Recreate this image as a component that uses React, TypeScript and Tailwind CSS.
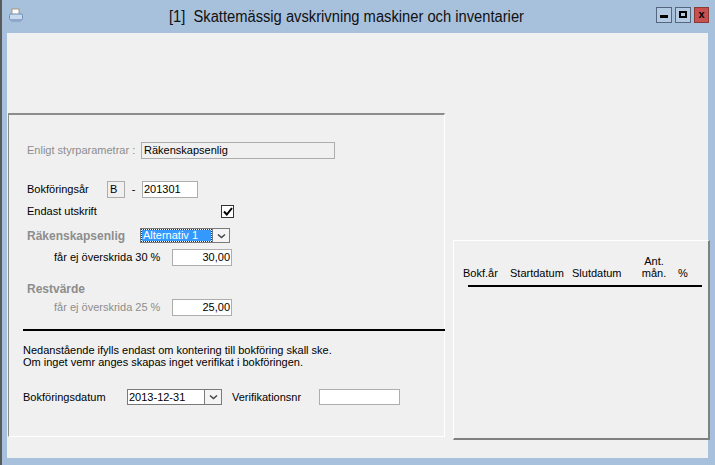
import React from "react";

const Arrow = () => (
  <div className="w-[17px] shrink-0 h-full border-l border-[#7a7a7a] bg-[#f4f4f4] flex items-center justify-center">
    <svg width="9" height="6" viewBox="0 0 9 6"><path d="M1 1.5 L4.5 4.5 L8 1.5" stroke="#444" strokeWidth="1.5" fill="none" /></svg>
  </div>
);

export default function App() {
  return (
    <div className="w-[715px] h-[465px] bg-[#a7c0dc] relative overflow-hidden text-[11px] text-black whitespace-nowrap" style={{ fontFamily: "'Liberation Sans', Arial, sans-serif" }}>
      <div className="absolute left-0 top-0 w-[2px] h-full bg-[#5a5a5a]" />
      <div className="h-[33px] flex items-center pl-[8px] pr-[6px] relative">
        <svg width="16" height="16" viewBox="0 0 16 16" className="mt-[-2px]">
          <rect x="4" y="1" width="7" height="6" fill="#fff" stroke="#9a8a6a" strokeWidth="0.8" />
          <rect x="1.5" y="6" width="13" height="6" rx="1.5" fill="#c9d9ee" stroke="#6f8db5" />
          <rect x="3" y="11" width="10" height="3" fill="#8fa9cc" />
        </svg>
        <div className="flex-1 text-center text-[16px] text-[#111] pl-[14px]" style={{ transform: "scaleX(0.92)" }}>[1]&nbsp; Skattemässig avskrivning maskiner och inventarier</div>
        <div className="flex gap-[3px] mt-[-4px]">
          <div className="w-[16px] h-[16px] border border-[#55677f] bg-[#b4c9e2] flex items-center justify-center"><div className="w-[8px] h-[3px] bg-black mt-[4px]" /></div>
          <div className="w-[16px] h-[16px] border border-[#55677f] bg-[#b4c9e2] flex items-center justify-center"><div className="w-[8px] h-[7px] border-2 border-black" /></div>
          <div className="w-[15px] h-[16px] border border-[#8a3a32] bg-[#c75050] flex items-center justify-center text-[11px] font-bold leading-none">x</div>
        </div>
      </div>
      <div className="absolute left-[7px] top-[33px] w-[701px] h-[425px] bg-[#f0f0f0] flex">
        <div className="w-[438px] shrink-0 pt-[80px] flex flex-col">
          <div className="ml-[1px] h-[324px] border-t-2 border-l border-[#8c8c8c] border-r border-b border-r-white border-b-white flex flex-col pl-[18px]">
            <div className="mt-[27px] h-[17px] flex items-center">
              <span className="w-[114px] shrink-0 text-[#8d8d8d]">Enligt styrparametrar :</span>
              <div className="w-[194px] h-[17px] border border-[#adadad] bg-[#f0f0f0] pl-[2px] leading-[15px]">Räkenskapsenlig</div>
            </div>
            <div className="mt-[22px] h-[17px] flex items-center">
              <span className="w-[80px] shrink-0">Bokföringsår</span>
              <div className="w-[18px] h-[17px] border border-[#adadad] pl-[2px] leading-[15px]">B</div>
              <span className="w-[17px] text-center">-</span>
              <div className="w-[56px] h-[17px] border border-[#adadad] bg-white pl-[1px] leading-[15px]">201301</div>
            </div>
            <div className="mt-[7px] h-[13px] flex items-center">
              <span className="w-[194px] shrink-0">Endast utskrift</span>
              <div className="w-[13px] h-[13px] border border-[#333] bg-white flex items-center justify-center">
                <svg width="10" height="9" viewBox="0 0 10 9"><path d="M1 4.5 L3.8 7.5 L9 1" stroke="#000" strokeWidth="2" fill="none" /></svg>
              </div>
            </div>
            <div className="mt-[10px] h-[15px] flex items-center">
              <span className="w-[113px] shrink-0 font-bold text-[#8d8d8d] text-[12px]">Räkenskapsenlig</span>
              <div className="w-[90px] h-[15px] border border-[#7a7a7a] bg-white flex">
                <div className="flex-1 m-[1px] bg-[#3399ff] text-white leading-[11px] pl-[1px] outline-1 outline-dotted outline-[#333]">Alternativ 1</div>
                <Arrow />
              </div>
            </div>
            <div className="mt-[6px] h-[17px] flex items-center">
              <span className="w-[145px] shrink-0 pl-[27px]">får ej överskrida 30 %</span>
              <div className="w-[60px] h-[17px] border border-[#adadad] bg-white text-right pr-[1px] leading-[15px]">30,00</div>
            </div>
            <div className="mt-[16px] h-[14px] flex items-center font-bold text-[#8d8d8d] text-[12px]">Restvärde</div>
            <div className="mt-[3px] h-[17px] flex items-center">
              <span className="w-[145px] shrink-0 pl-[27px] text-[#8d8d8d]">får ej överskrida 25 %</span>
              <div className="w-[60px] h-[17px] border border-[#adadad] bg-white text-right pr-[1px] leading-[15px]">25,00</div>
            </div>
            <div className="mt-[13px] ml-[-4px] mr-[-1px] h-[2px] bg-black" />
            <div className="mt-[13px] ml-[-4px] leading-[12px]">
              <div>Nedanstående ifylls endast om kontering till bokföring skall ske.</div>
              <div>Om inget vemr anges skapas inget verifikat i bokföringen.</div>
            </div>
            <div className="mt-[21px] ml-[-4px] h-[16px] flex items-center">
              <span className="w-[104px] shrink-0">Bokföringsdatum</span>
              <div className="w-[95px] h-[16px] border border-[#7a7a7a] bg-white flex">
                <div className="flex-1 pl-[1px] leading-[14px]">2013-12-31</div>
                <Arrow />
              </div>
              <span className="w-[97px] shrink-0 pl-[10px]">Verifikationsnr</span>
              <div className="w-[81px] h-[16px] border border-[#adadad] bg-white" />
            </div>
          </div>
        </div>
        <div className="ml-[8px] pt-[207px]">
          <div className="w-[257px] h-[200px] border border-t-white border-l-white border-r-2 border-b-2 border-[#808080] pl-[9px] pr-[6px]">
            <div className="mt-[14px] flex items-end text-[11px] leading-[12px]">
              <span className="w-[47px] shrink-0">Bokf.år</span>
              <span className="w-[62px] shrink-0">Startdatum</span>
              <span className="w-[62px] shrink-0">Slutdatum</span>
              <span className="w-[40px] shrink-0 text-center">Ant.<br />mån.</span>
              <span className="w-[18px] shrink-0 text-center">%</span>
            </div>
            <div className="mt-[6px] ml-[5px] h-[2px] bg-black" />
          </div>
        </div>
      </div>
    </div>
  );
}
